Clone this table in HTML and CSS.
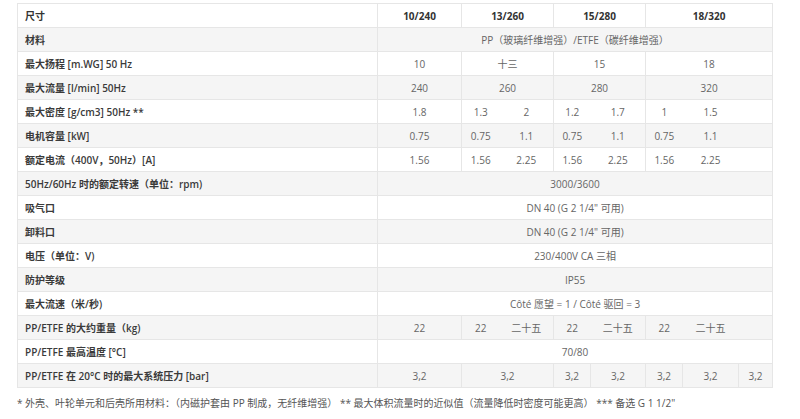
FILE: index.html
```html
<!DOCTYPE html>
<html lang="zh">
<head>
<meta charset="utf-8">
<title>规格</title>
<link rel="stylesheet" href="styles.css">
</head>
<body>
<div class="page">
<table class="spec">
  <colgroup>
    <col class="c-label"><col class="c-a"><col class="c-b1"><col class="c-b2"><col class="c-c1"><col class="c-c2"><col class="c-d1"><col class="c-d2"><col class="c-d3">
  </colgroup>
  <tbody>
    <tr class="head">
      <td class="lab">尺寸</td>
      <td class="g">10/240</td>
      <td class="g" colspan="2">13/260</td>
      <td class="g" colspan="2">15/280</td>
      <td class="g" colspan="3">18/320</td>
    </tr>
    <tr class="alt">
      <td class="lab">材料</td>
      <td class="g" colspan="8">PP（玻璃纤维增强）/ETFE（碳纤维增强）</td>
    </tr>
    <tr>
      <td class="lab">最大扬程 [m.WG] 50 Hz</td>
      <td class="g">10</td>
      <td class="g" colspan="2">十三</td>
      <td class="g" colspan="2">15</td>
      <td class="g" colspan="3">18</td>
    </tr>
    <tr class="alt">
      <td class="lab">最大流量 [l/min] 50Hz</td>
      <td class="g">240</td>
      <td class="g" colspan="2">260</td>
      <td class="g" colspan="2">280</td>
      <td class="g" colspan="3">320</td>
    </tr>
    <tr>
      <td class="lab">最大密度 [g/cm3] 50Hz **</td>
      <td class="g">1.8</td>
      <td class="g">1.3</td><td>2</td>
      <td class="g">1.2</td><td>1.7</td>
      <td class="g">1</td><td>1.5</td><td></td>
    </tr>
    <tr class="alt">
      <td class="lab">电机容量 [kW]</td>
      <td class="g">0.75</td>
      <td class="g">0.75</td><td>1.1</td>
      <td class="g">0.75</td><td>1.1</td>
      <td class="g">0.75</td><td>1.1</td><td></td>
    </tr>
    <tr>
      <td class="lab">额定电流（400V，50Hz）[A]</td>
      <td class="g">1.56</td>
      <td class="g">1.56</td><td>2.25</td>
      <td class="g">1.56</td><td>2.25</td>
      <td class="g">1.56</td><td>2.25</td><td></td>
    </tr>
    <tr class="alt">
      <td class="lab">50Hz/60Hz 时的额定转速（单位：rpm)</td>
      <td class="g" colspan="8">3000/3600</td>
    </tr>
    <tr>
      <td class="lab">吸气口</td>
      <td class="g" colspan="8">DN 40 (G 2 1/4" 可用)</td>
    </tr>
    <tr class="alt">
      <td class="lab">卸料口</td>
      <td class="g" colspan="8">DN 40 (G 2 1/4" 可用)</td>
    </tr>
    <tr>
      <td class="lab">电压（单位：V)</td>
      <td class="g" colspan="8">230/400V CA 三相</td>
    </tr>
    <tr class="alt">
      <td class="lab">防护等级</td>
      <td class="g" colspan="8">IP55</td>
    </tr>
    <tr>
      <td class="lab">最大流速（米/秒)</td>
      <td class="g" colspan="8">Côté 愿望 = 1 / Côté 驱回 = 3</td>
    </tr>
    <tr class="alt">
      <td class="lab">PP/ETFE 的大约重量（kg)</td>
      <td class="g">22</td>
      <td class="g">22</td><td>二十五</td>
      <td class="g">22</td><td>二十五</td>
      <td class="g">22</td><td>二十五</td><td></td>
    </tr>
    <tr>
      <td class="lab">PP/ETFE 最高温度 [°C]</td>
      <td class="g" colspan="8">70/80</td>
    </tr>
    <tr class="alt">
      <td class="lab">PP/ETFE 在 20°C 时的最大系统压力 [bar]</td>
      <td class="g">3,2</td>
      <td class="g" colspan="2">3,2</td>
      <td class="g">3,2</td>
      <td class="g">3,2</td>
      <td class="g">3,2</td>
      <td class="g">3,2</td>
      <td class="g">3,2</td>
    </tr>
  </tbody>
</table>
<p class="note">* 外壳、叶轮单元和后壳所用材料：（内磁护套由 PP 制成，无纤维增强） ** 最大体积流量时的近似值（流量降低时密度可能更高） *** 备选 G 1 1/2"</p>
</div>
</body>
</html>
```
FILE: styles.css
```css
html, body {
  margin: 0;
  padding: 0;
  background: #ffffff;
}

body {
  font-family: "Open Sans", "Noto Sans CJK SC", sans-serif;
  font-size: 10px;
  color: #666666;
}

.page {
  padding: 3px 0 0 17px;
}

.spec {
  border-collapse: collapse;
  table-layout: fixed;
  width: 755px;
  border: 1px solid #e6e6e6;
}

.c-label { width: 360px; }
.c-a { width: 84px; }
.c-b1 { width: 38px; }
.c-b2 { width: 54px; }
.c-c1 { width: 37px; }
.c-c2 { width: 55px; }
.c-d1 { width: 37px; }
.c-d2 { width: 56px; }
.c-d3 { width: 34px; }

.spec td {
  height: 23px;
  padding: 0;
  text-align: center;
  vertical-align: middle;
  border-top: 1px solid #e6e6e6;
  white-space: nowrap;
  line-height: 14px;
}

.spec td.g {
  border-left: 1px solid #e6e6e6;
}

.spec td.lab {
  text-align: left;
  padding-left: 7px;
  color: #3a3a3a;
  font-weight: 600;
}

.spec tr.alt td {
  background: #f5f5f5;
}

.spec tr.head td {
  font-weight: 700;
  color: #333333;
}

.note {
  margin: 8px 0 0 0;
  font-size: 10px;
  line-height: 14px;
  color: #555555;
}
```
